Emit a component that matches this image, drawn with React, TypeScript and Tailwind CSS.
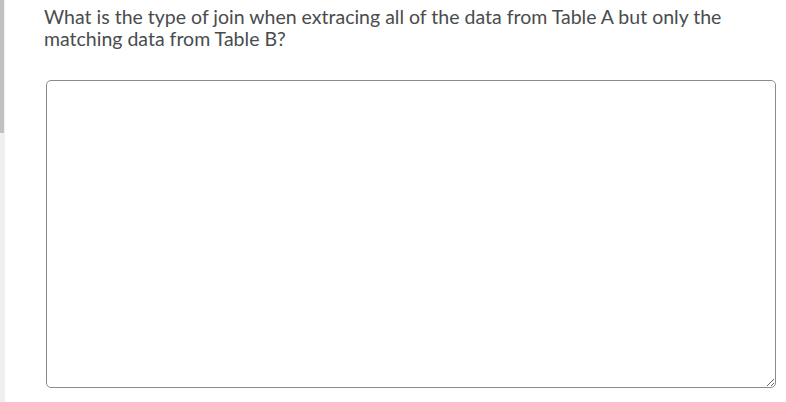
import React from 'react';

const App: React.FC = () => {
    return (
        <div className="flex min-h-[402px] w-[786px] bg-white">
            {/* left scroll strip */}
            <div className="flex w-[5px] flex-col bg-[#efefef]">
                <div className="h-[133px] w-[4px] bg-[#c1c1c1]" />
            </div>

            <div className="flex-1 pl-[39px] pr-[10px] pt-[6px]">
                <p className="w-[700px] font-['Lato',sans-serif] text-[19.5px] leading-[22px] text-[#494c4e]">
                    What is the type of join when extracing all of the data from Table A but only the matching data from Table B?
                </p>

                <textarea
                    className="mt-[30px] ml-[2px] block h-[308px] w-[730px] resize-y rounded-[5px] border border-[#868c92] bg-white outline-none"
                    aria-label="Answer"
                />
            </div>
        </div>
    );
};

export default App;
